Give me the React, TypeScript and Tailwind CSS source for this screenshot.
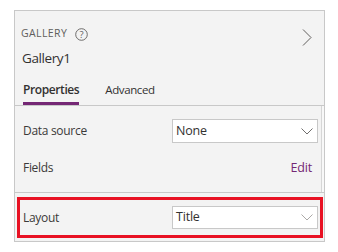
import React from "react";

const Chevron = ({ color }: { color: string }) => (
  <svg width="12" height="7" viewBox="0 0 12 7" fill="none">
    <path d="M0.5 0.5 L6 6 L11.5 0.5" stroke={color} strokeWidth="0.9" />
  </svg>
);

const Dropdown = ({ value, h, color }: { value: string; h: string; color: string }) => (
  <div
    className={`w-[146px] ${h} bg-white border border-[#c8c8c8] flex items-center justify-between pl-[3px] pr-[4px] text-[12.5px] tracking-[-0.2px] text-[#323130]`}
  >
    <span>{value}</span>
    <Chevron color={color} />
  </div>
);

export default function App() {
  return (
    <div
      className="w-[338px] h-[252px] bg-white pt-[10px] pl-[14px]"
      style={{ fontFamily: '"Open Sans", "Noto Sans", sans-serif' }}
    >
      <div className="w-[311px] h-[232px] border border-[#c8c8c8] bg-[#f3f3f3] flex flex-col">
        {/* Header */}
        <div className="h-[95px] border-b border-[#c8c8c8] flex justify-between shrink-0">
          <div className="flex flex-col pl-[6px] pt-[16px]">
            <div className="flex items-center h-[14px] gap-[8px]">
              <span className="text-[10.5px] text-[#605e5c] tracking-[0.4px]">GALLERY</span>
              <svg width="13" height="13" viewBox="0 0 13 13" fill="none">
                <circle cx="6.5" cy="6.5" r="5.8" stroke="#605e5c" strokeWidth="0.9" />
                <text x="6.5" y="9.8" textAnchor="middle" fontSize="9.5" fill="#605e5c" fontFamily="Open Sans, sans-serif">?</text>
              </svg>
            </div>
            <div className="mt-[7px] h-[20px] pl-[1px] text-[13.5px] tracking-[-0.4px] leading-[20px] text-[#323130]">Gallery1</div>
            <div className="mt-[14px] flex gap-[26px] pl-[2px]">
              <div className="flex flex-col">
                <span className="text-[12px] leading-[16px] font-semibold tracking-[-0.4px] text-[#323130]">Properties</span>
                <div className="mt-[4px] h-[3px] bg-[#742774]" />
              </div>
              <span className="text-[11.5px] leading-[16px] tracking-[-0.4px] text-[#323130]">Advanced</span>
            </div>
          </div>
          <div className="pr-[12px] pt-[18px]">
            <svg width="10" height="17" viewBox="0 0 10 17" fill="none">
              <path d="M1 0.5 L9 8.5 L1 16.5" stroke="#605e5c" strokeWidth="1" />
            </svg>
          </div>
        </div>

        {/* Section 1 */}
        <div className="h-[87px] border-b border-[#c8c8c8] flex shrink-0">
          <div className="flex-1 flex flex-col pt-[13px] pl-[8px] pr-[3px]">
            <div className="flex items-center justify-between h-[24px]">
              <span className="text-[12px] tracking-[-0.3px] text-[#3b3a39]">Data source</span>
              <Dropdown value="None" h="h-[24px]" color="#605e5c" />
            </div>
            <div className="flex items-center justify-between h-[34px] mt-[8px] pr-[6px]">
              <span className="text-[12px] tracking-[-0.3px] text-[#3b3a39]">Fields</span>
              <span className="text-[12.5px] tracking-[-0.2px] text-[#742774]">Edit</span>
            </div>
          </div>
          <div className="w-[3px] border-l border-[#d6d6d6] bg-[#f8f8f8]" />
        </div>

        {/* Section 2 */}
        <div className="flex-1 pt-[4px] pl-[2px] pr-[1px]">
          <div className="h-[41px] border-[3px] border-[#e81123] flex items-center justify-between pl-[3px] pr-[2px]">
            <span className="text-[12px] tracking-[-0.3px] text-[#3b3a39]">Layout</span>
            <Dropdown value="Title" h="h-[23px]" color="#a19f9d" />
          </div>
        </div>
      </div>
    </div>
  );
}
